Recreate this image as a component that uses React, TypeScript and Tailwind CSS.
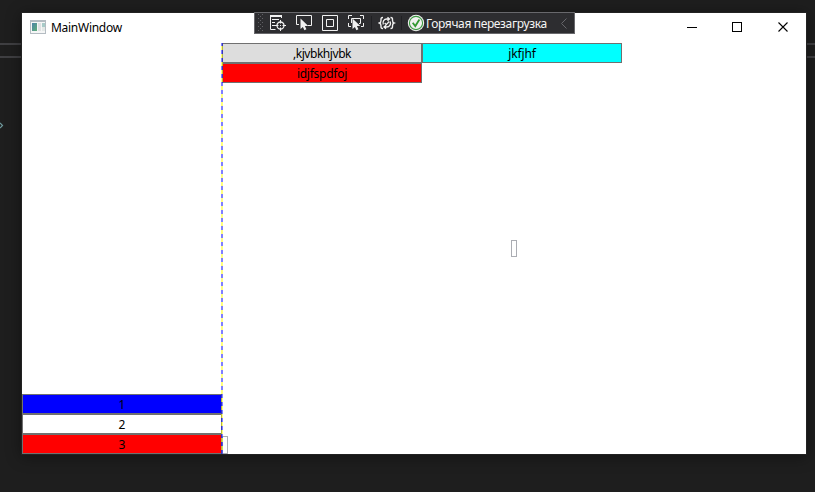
import type { ReactNode } from "react";

function Icon({ children, className = "" }: { children: ReactNode; className?: string }) {
  return (
    <svg width="18" height="18" viewBox="0 0 18 18" fill="none" stroke="#f1f1f1" className={`shrink-0 ${className}`}>
      {children}
    </svg>
  );
}

const cursor = "M5.5 4.5v10.500l2.400-2 1.500 3.200 2-.9-1.500-3.200h3.400z";

function DebugToolbar() {
  return (
    <div className="absolute left-[254px] top-[12px] flex h-[22px] w-[321px] items-center border border-[#68686c] bg-[#2d2d30]">
      <svg width="6" height="18" className="ml-[3px] shrink-0" fill="#626266">
        {[0, 4, 8, 12, 16].map((y) => (
          <path key={y} d={`M0 ${y}h1v1h-1zM4 ${y}h1v1h-1zM2 ${y + 2}h1v1h-1z`} />
        ))}
      </svg>
      <Icon className="ml-[5px]">
        <path d="M1 2h12" strokeWidth="2" />
        <path d="M1.5 2v13.500h5M12.500 2v2M3 5.500h7M3 8.500h3M3 11.500h3" />
        <circle cx="11.500" cy="11.500" r="3.500" strokeWidth="1.300" />
        <path d="M11.500 6v3.500M11.500 13.500V17M6 11.500h3.500M13.500 11.500H17" />
        <path d="M11 11h1v1h-1z" fill="#f1f1f1" stroke="none" />
      </Icon>
      <Icon className="ml-[8px]">
        <path d="M4 10.500H1.500v-9h15v10H13" />
        <path d={cursor} fill="#f1f1f1" stroke="none" />
      </Icon>
      <Icon className="ml-[8px]">
        <path d="M1.500 1.500h15v15h-15zM5.500 5.500h7v7h-7z" />
      </Icon>
      <Icon className="ml-[8px]">
        <path d="M1.500 5V1.500H5M13 1.500h3.500V5M1.500 9v3.500H4M16.500 9v3.500H14M4.500 9V4.500h9v5H12" />
        <path d={cursor} fill="#f1f1f1" stroke="none" />
      </Icon>
      <span className="ml-[6px] h-[14px] w-px bg-[#202023]" />
      <Icon className="ml-[6px]">
        <path d="M5 3.500C2.800 3.500 3 4.600 3 6.200 3 8 2.700 8.600 1.500 9 2.700 9.400 3 10 3 11.800c0 1.600-.2 2.700 2 2.700M12.500 3.500c2.200 0 2 1.100 2 2.700 0 1.800.3 2.400 1.500 2.800-1.200.4-1.500 1-1.500 2.800 0 1.600.2 2.700-2 2.700" strokeWidth="1.400" />
        <path d="M5.300 10.500C4.300 7.500 6 5 8.800 5h2M9.500 3.200L11.500 5l-2 1.800M12.200 7.500c1 3-.7 5.500-3.500 5.500h-2M8 11.200L6 13l2 1.800M6.700 9l1.600 1.600 2.900-3.100" strokeWidth="1.300" />
      </Icon>
      <span className="ml-[5px] h-[14px] w-px bg-[#202023]" />
      <Icon className="ml-[5px]">
        <circle cx="9" cy="9" r="8.200" fill="#f1f1f1" stroke="none" />
        <circle cx="9" cy="9" r="6.600" stroke="#3c9a42" strokeWidth="1.100" />
        <path d="M5.700 8.800l2.600 3.300 4.100-6.500" stroke="#339933" strokeWidth="1.800" />
      </Icon>
      <span className="ml-[1px] mt-[2px] w-[122px] whitespace-nowrap text-[12px] leading-[20px] tracking-[-0.36px] text-[#f5f5f5]">Горячая перезагрузка</span>
      <svg width="6" height="11" className="ml-[13px] shrink-0" fill="none" stroke="#67676b">
        <path d="M5.500.5l-5 5 5 5" />
      </svg>
    </div>
  );
}

function TitleBar() {
  return (
    <header className="flex h-[30px] shrink-0 items-center">
      <svg width="16" height="14" className="mb-[2px] ml-[8px] shrink-0" shapeRendering="crispEdges">
        <defs>
          <linearGradient id="pane" x1="0" y1="0" x2="1" y2="1">
            <stop offset="0" stopColor="#4d83a8" />
            <stop offset="1" stopColor="#5fae78" />
          </linearGradient>
        </defs>
        <path d="M0 0h16v14H0z" fill="#b4bcc2" />
        <path d="M1 2h14v11H1z" fill="#f5f6f6" />
        <path d="M2 3h5v8H2z" fill="url(#pane)" />
        <path d="M8 3h3v8H8z" fill="#dfe1e2" />
        <path d="M12 3h3v4h-3z" fill="#a8cbc8" />
        <path d="M12 7h3v4h-3z" fill="#e3e8e6" />
      </svg>
      <span className="ml-[5px] text-[12px] leading-[16px] tracking-[-0.28px]">MainWindow</span>
      <svg width="102" height="12" className="ml-auto mr-[17px] shrink-0" fill="none" stroke="#000">
        <path d="M0 5.500h10M45.500.5h9v9h-9z" shapeRendering="crispEdges" />
        <path d="M91.500.5l9 9M100.500.5l-9 9" strokeWidth="1.100" />
      </svg>
    </header>
  );
}

function Button({ label, color }: { label: string; color: string }) {
  return (
    <button className={`flex h-[20px] w-[200px] shrink-0 items-center justify-center border border-[#707070] pt-[2px] text-[12px] leading-[16px] ${color}`}>
      <span>{label}</span>
    </button>
  );
}

export default function App() {
  return (
    <div
      className="relative h-[492px] w-[815px] overflow-hidden bg-[#1e1e1e] text-black"
      style={{ fontFamily: '"Segoe UI", "Noto Sans", "Open Sans", sans-serif' }}
    >
      <div className="mt-[43px] h-[15px] border-y-2 border-[#3f3f42]" />
      <svg width="4" height="7" className="absolute left-0 top-[122px]" fill="none" stroke="#6f9a9d" strokeWidth="1.200">
        <path d="M0 1l2.500 2.500L0 6" />
      </svg>
      <main className="absolute left-[22px] top-[13px] flex h-[441px] w-[784px] flex-col bg-white shadow-[0_2px_14px_1px_rgba(0,0,0,0.4)] outline outline-1 outline-[#222222]">
        <TitleBar />
        <div className="relative flex min-h-0 flex-1">
          <aside className="flex w-[200px] flex-col justify-end">
            <Button label="1" color="bg-[#0000ff]" />
            <Button label="2" color="bg-white" />
            <Button label="3" color="bg-[#ff0000]" />
          </aside>
          <section className="relative flex-1">
            <div className="flex flex-wrap">
              <Button label=",kjvbkhjvbk" color="bg-[#dddddd] tracking-[-0.45px]" />
              <Button label="jkfjhf" color="bg-[#00ffff] tracking-[-0.15px]" />
            </div>
            <Button label="idjfspdfoj" color="bg-[#ff0000] tracking-[-0.25px]" />
            <div className="absolute left-[289px] top-[197px] h-[17px] w-[6px] border border-[#abadb3]" />
            <div className="absolute bottom-0 left-0 h-[18px] w-[6px] border border-[#abadb3]" />
          </section>
          <div className="absolute inset-y-0 left-[199px] w-[2px] bg-[repeating-linear-gradient(to_bottom,rgba(0,0,255,0.5)_0px,rgba(0,0,255,0.5)_3px,rgba(255,255,0,0.5)_3px,rgba(255,255,0,0.5)_7px,rgba(0,0,255,0.5)_7px,rgba(0,0,255,0.5)_8px)]" />
        </div>
      </main>
      <DebugToolbar />
    </div>
  );
}
